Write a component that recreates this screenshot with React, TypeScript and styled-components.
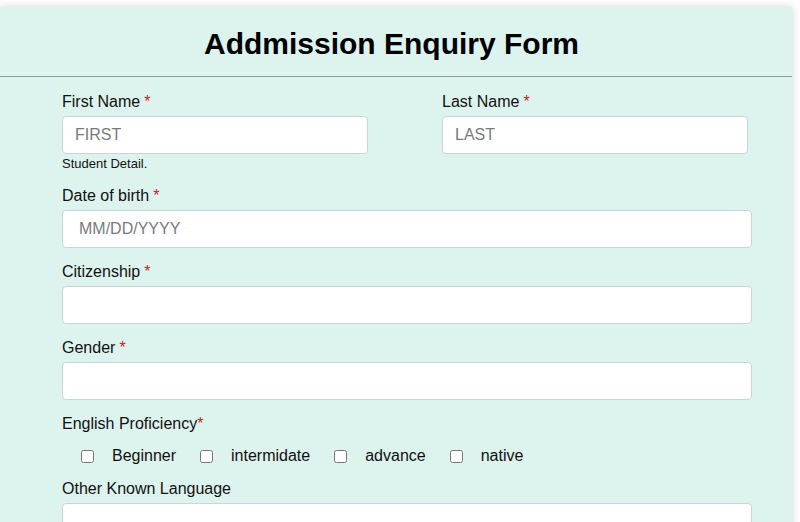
import React from "react";
import styled, { createGlobalStyle } from "styled-components";

const Global = createGlobalStyle`
  html, body { margin: 0; padding: 0; background: #ffffff; }
  body { font-family: "Liberation Sans", Arial, sans-serif; color: #111; overflow: hidden; }
  * { box-sizing: border-box; }
`;

const Card = styled.div`
  margin: 7px 8px 0 0;
  background: #ddf3ed;
  box-shadow: 0 0 8px rgba(0, 0, 0, 0.18);
  min-height: 560px;
`;

const Header = styled.header`
  height: 70px;
  border-bottom: 1px solid #9a9a9a;
  display: flex;
  align-items: center;
  justify-content: center;
  padding: 5px 9px 0 0;
`;

const Title = styled.h1`
  margin: 0;
  font-size: 30px;
  font-weight: 700;
  color: #000;
  line-height: 34px;
`;

const Form = styled.form`
  padding: 16px 40px 0 62px;
  display: flex;
  flex-direction: column;
`;

const Row = styled.div`
  display: grid;
  grid-template-columns: 1fr 1fr;
  column-gap: 74px;
  padding-right: 4px;
`;

const Field = styled.div<{ $gap?: number }>`
  display: flex;
  flex-direction: column;
  margin-bottom: ${(p) => (p.$gap ?? 15)}px;
`;

const Label = styled.label`
  font-size: 16px;
  line-height: 17px;
  color: #111;
  margin-bottom: 6px;
`;

const Req = styled.span<{ $tight?: boolean }>`
  color: #e0102a;
  margin-left: ${(p) => (p.$tight ? 0 : 4)}px;
`;

const Input = styled.input<{ $pad?: number }>`
  height: 38px;
  width: 100%;
  border: 1px solid #cdd3d8;
  border-radius: 4px;
  background: #fff;
  font-family: "Liberation Sans", Arial, sans-serif;
  font-size: 16px;
  padding: 0 ${(p) => p.$pad ?? 12}px;
  color: #222;
  outline: none;
  &::placeholder { color: #777b80; }
`;

const Help = styled.small`
  font-size: 13px;
  line-height: 16px;
  margin-top: 2px;
  color: #111;
`;

const Options = styled.div`
  display: flex;
  align-items: center;
  padding-left: 19px;
  height: 20px;
  margin-top: 8px;
`;

const Option = styled.label`
  display: flex;
  align-items: center;
  gap: 18px;
  margin-right: 24px;
  font-size: 16px;
  line-height: 20px;
  color: #111;
`;

const Check = styled.input`
  width: 13px;
  height: 13px;
  margin: 0;
`;

export default function App() {
  return (
    <>
      <Global />
      <Card>
        <Header>
          <Title>Addmission Enquiry Form</Title>
        </Header>
        <Form>
          <Row>
            <Field>
              <Label>
                First Name<Req>*</Req>
              </Label>
              <Input placeholder="FIRST" />
              <Help>Student Detail.</Help>
            </Field>
            <Field>
              <Label>
                Last Name<Req>*</Req>
              </Label>
              <Input placeholder="LAST" />
            </Field>
          </Row>
          <Field>
            <Label>
              Date of birth<Req>*</Req>
            </Label>
            <Input $pad={16} placeholder="MM/DD/YYYY" />
          </Field>
          <Field>
            <Label>
              Citizenship<Req>*</Req>
            </Label>
            <Input />
          </Field>
          <Field>
            <Label>
              Gender<Req>*</Req>
            </Label>
            <Input />
          </Field>
          <Field $gap={14}>
            <Label>
              English Proficiency<Req $tight>*</Req>
            </Label>
            <Options>
              {["Beginner", "intermidate", "advance", "native"].map((o) => (
                <Option key={o}>
                  <Check type="checkbox" />
                  {o}
                </Option>
              ))}
            </Options>
          </Field>
          <Field>
            <Label>Other Known Language</Label>
            <Input />
          </Field>
        </Form>
      </Card>
    </>
  );
}
